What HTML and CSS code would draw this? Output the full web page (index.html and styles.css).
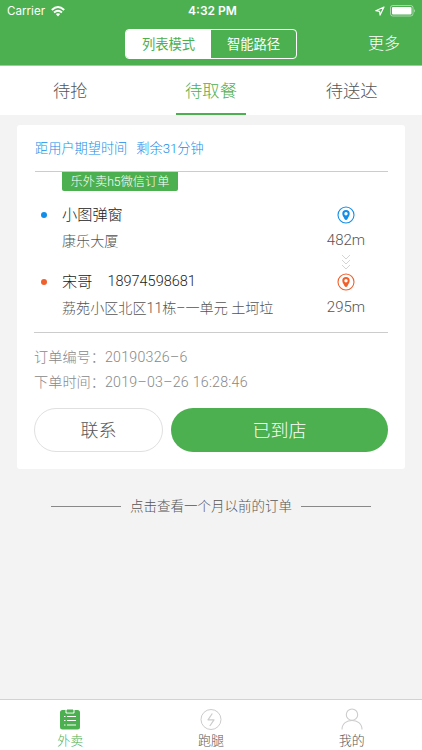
FILE: index.html
```html
<!DOCTYPE html>
<html lang="zh-CN">
<head>
<meta charset="utf-8">
<title>待取餐</title>
<link rel="stylesheet" href="styles.css">
</head>
<body>
<div class="app">
  <header class="header">
    <div class="status">
      <div class="carrier"><span>Carrier</span>
        <svg width="14" height="11" viewBox="0 0 14 11" fill="none" stroke="#fff" stroke-width="1.9"><path d="M.8 4Q7-1.8 13.2 4M3 6.5Q7 2.8 11 6.5"/><path d="M4.8 8.1Q7 6.2 9.2 8.1L7 10.4z" fill="#fff" stroke="none"/></svg>
      </div>
      <div class="clock">4:32 PM</div>
      <div class="power">
        <svg width="10" height="10" viewBox="0 0 10 10" fill="none" stroke="#fff" stroke-width="1.2" stroke-linejoin="round"><path d="M9 1L.8 4.7l3.8.6.5 3.8z"/></svg>
        <svg width="26" height="12" viewBox="0 0 26 12"><rect x=".5" y=".5" width="22.5" height="10.5" rx="2.2" fill="none" stroke="#fff" stroke-opacity=".5"/><rect x="2" y="2" width="19.5" height="7.5" rx="1" fill="#fff"/><path d="M24 4q2 1.8 0 3.6z" fill="#fff" fill-opacity=".5"/></svg>
      </div>
    </div>
    <div class="nav">
      <span></span>
      <div class="segment"><span class="seg seg-on">列表模式</span><span class="seg">智能路径</span></div>
      <span class="more">更多</span>
    </div>
  </header>
  <nav class="tabs">
    <span class="tab">待抢</span>
    <span class="tab tab-on">待取餐</span>
    <span class="tab">待送达</span>
  </nav>
  <main class="content">
    <section class="card">
      <div class="expect"><span>距用户期望时间</span><span>剩余31分钟</span></div>
      <div class="route">
        <div class="stops">
          <span class="badge">乐外卖h5微信订单</span>
          <div class="name name-blue">小图弹窗</div>
          <div class="address">康乐大厦</div>
          <div class="name name-orange"><span>宋哥</span><span class="phone">18974598681</span></div>
          <div class="address address-end">荔苑小区北区11栋–一单元 土坷垃</div>
        </div>
        <div class="distance">
          <svg class="pin pin-blue" width="18" height="18" viewBox="0 0 18 18"><circle cx="9" cy="9" r="8" fill="none" stroke="currentColor" stroke-width="1.1"/><path fill="currentColor" fill-rule="evenodd" d="M9 4a3.7 3.7 0 0 1 3.7 3.7c0 2-1.7 3.6-2.2 5.2Q9 15 7.5 12.9C7 11.3 5.3 9.7 5.3 7.7A3.7 3.7 0 0 1 9 4zM9 6a1.7 1.7 0 1 0 0 3.4A1.7 1.7 0 0 0 9 6z"/></svg>
          <span class="meters">482m</span>
          <svg class="arrows" width="10" height="16" viewBox="0 0 10 16" fill="none" stroke="#d4d4d4" stroke-width="1"><path d="M1 1l4 4 4-4M1 6l4 4 4-4M1 11l4 4 4-4"/></svg>
          <svg class="pin pin-orange" width="18" height="18" viewBox="0 0 18 18"><circle cx="9" cy="9" r="8" fill="none" stroke="currentColor" stroke-width="1.1"/><path fill="currentColor" fill-rule="evenodd" d="M9 4a3.7 3.7 0 0 1 3.7 3.7c0 2-1.7 3.6-2.2 5.2Q9 15 7.5 12.9C7 11.3 5.3 9.7 5.3 7.7A3.7 3.7 0 0 1 9 4zM9 6a1.7 1.7 0 1 0 0 3.4A1.7 1.7 0 0 0 9 6z"/></svg>
          <span class="meters">295m</span>
        </div>
      </div>
      <div class="order">
        <div class="row"><span class="label">订单编号：</span><span class="number">20190326–6</span></div>
        <div class="row"><span class="label">下单时间：</span><span class="number date">2019–03–26 16:28:46</span></div>
      </div>
      <div class="actions"><span class="button contact">联系</span><span class="button arrived">已到店</span></div>
    </section>
    <div class="history">点击查看一个月以前的订单</div>
  </main>
  <footer class="bar">
    <div class="item item-on">
      <svg width="22" height="22" viewBox="0 0 22 22"><rect x="1" y="2" width="20" height="19.5" rx="2.5" fill="#4caf50"/><path d="M7 1.500v3.500h8V1.500" fill="none" stroke="#fff"/><path d="M8 1.500h6v2.700H8z" fill="#4caf50"/><path d="M5 8.500h1.500M8 8.500h9M5 12.500h1.500M8 12.500h9M5 17h1.500M8 17h9" stroke="#fff" fill="none"/></svg>
      <span>外卖</span>
    </div>
    <div class="item">
      <svg width="22" height="22" viewBox="0 0 22 22" fill="none" stroke="#ccc"><circle cx="11" cy="11.500" r="10"/><path d="M12.300 5.500L8 11.800h6L9.800 18" stroke-linejoin="round" stroke-width="1.200"/></svg>
      <span>跑腿</span>
    </div>
    <div class="item">
      <svg width="22" height="22" viewBox="0 0 22 22" fill="none" stroke="#ccc" stroke-width="1.1"><circle cx="11" cy="6.700" r="5.700"/><path d="M1 21.500C1 9.400 21 9.400 21 21.500"/></svg>
      <span>我的</span>
    </div>
  </footer>
</div>
</body>
</html>
```
FILE: styles.css
```css
* { box-sizing: border-box; }
body {
  margin: 0;
  font-family: Roboto, "Noto Sans CJK SC", sans-serif;
  font-weight: 300;
  color: #555;
}
svg { display: block; flex: none; }
span { white-space: nowrap; }
.app { width: 422px; height: 750px; display: flex; flex-direction: column; background: #f3f3f3; overflow: hidden; }

.header { height: 66px; background: #4caf50; border-bottom: 1px solid #95d097; color: #fff; }
.status { height: 22px; display: grid; grid-template-columns: 1fr auto 1fr; align-items: center; padding: 0 7px; font: 400 12px/22px Inter, sans-serif; }
.carrier { display: flex; align-items: center; gap: 6px; font-size: 11.6px; }
.clock { font-weight: 600; padding-left: 3px; }
.power { display: flex; align-items: center; justify-content: flex-end; gap: 5px; margin-right: -1px; }
.nav { display: grid; grid-template-columns: 1fr 172px 1fr; align-items: center; padding-top: 6px; }
.segment { display: flex; height: 30px; border: 1px solid #fff; border-radius: 4px; overflow: hidden; }
.seg { flex: 1; text-align: center; font-size: 13.3px; line-height: 29px; font-weight: 400; }
.seg-on { background: #fff; color: #4caf50; }
.more { justify-self: end; margin-right: 22px; font-size: 16px; line-height: 32px; }

.tabs { height: 49px; background: #fff; display: grid; grid-template-columns: repeat(3, 1fr); justify-items: center; }
.tab { font-size: 17.3px; line-height: 50px; padding: 0 9px; height: 49px; }
.tab-on { color: #4caf50; border-bottom: 2px solid #4caf50; }

.content { flex: 1; padding: 10px 17px 0; }
.card { height: 344px; background: #fff; border-radius: 3px; padding: 0 17px; }
.expect { height: 47px; margin-left: 1px; display: flex; gap: 9px; font-size: 13.2px; line-height: 48px; color: #118ee9; border-bottom: 1px solid #ccc; }
.route { display: flex; height: 161px; border-bottom: 1px solid #ccc; }
.stops { flex: 1; padding-left: 28px; }
.badge { display: block; width: 116px; height: 19px; border-radius: 0 0 2px 2px; background: #4caf50; color: #fff; font-size: 12.2px; line-height: 20px; text-align: center; }
.name { display: flex; align-items: center; height: 26px; color: #222; font-size: 15.2px; line-height: 26px; }
.name::before { content: ""; width: 6px; height: 6px; margin: 0 15px 0 -21px; border-radius: 50%; background: #118ee9; }
.name-blue { margin-top: 11px; }
.name-orange { margin-top: 15px; }
.name-orange::before { background: #f0602b; }
.phone { margin-left: 15px; font-size: 14.5px; }
.address { height: 26px; font-size: 14.1px; line-height: 26px; white-space: nowrap; }
.distance { width: 84px; padding-top: 34px; display: flex; flex-direction: column; align-items: center; }
.meters { height: 30px; line-height: 32px; font-size: 15px; }
.arrows { margin: 0 0 3px; }
.pin-blue { color: #118ee9; }
.pin-orange { color: #f0602b; }
.order { padding-top: 12px; color: #888; font-size: 14.2px; }
.row { height: 25px; line-height: 25px; display: flex; }
.label { width: 71px; }
.number { letter-spacing: .25px; }
.actions { margin-top: 13px; display: grid; grid-template-columns: 129px 1fr; gap: 8px; }
.button { height: 44px; border-radius: 22px; text-align: center; font-size: 18px; line-height: 43px; }
.contact { border: 1px solid #e0e0e0; }
.arrived { background: #4caf50; color: #fff; line-height: 45px; }
.history { display: flex; justify-content: center; align-items: center; gap: 9px; margin-top: 25px; font-size: 13.5px; line-height: 24px; white-space: nowrap; }
.history::before, .history::after { content: ""; width: 70px; height: 1px; background: #888; }

.bar { height: 51px; background: #fff; border-top: 1px solid #d2d2d2; display: grid; grid-template-columns: repeat(3, 1fr); padding-top: 8px; }
.item { display: flex; flex-direction: column; align-items: center; font-size: 13px; line-height: 22px; }
.item-on { color: #4caf50; }
```
